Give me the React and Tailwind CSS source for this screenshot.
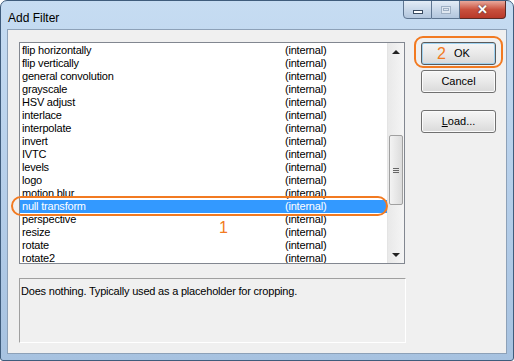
const filters = [
  "flip horizontally",
  "flip vertically",
  "general convolution",
  "grayscale",
  "HSV adjust",
  "interlace",
  "interpolate",
  "invert",
  "IVTC",
  "levels",
  "logo",
  "motion blur",
  "null transform",
  "perspective",
  "resize",
  "rotate",
  "rotate2",
];

const font = { fontFamily: '"Liberation Sans", Arial, sans-serif' };

function WinButton({ children, isDefault }) {
  return (
    <button
      className={`w-[75px] h-[23px] rounded-[3px] border text-[11px] text-black bg-gradient-to-b from-[#f6f6f6] via-[#e9e9e9] to-[#d9d9d9] flex items-center justify-center ${
        isDefault ? "border-[#5a5a5a] shadow-[inset_0_0_0_1px_#9fd2f0]" : "border-[#707070] shadow-[inset_0_0_0_1px_#fbfbfb]"
      }`}
    >
      {children}
    </button>
  );
}

function ScrollBar() {
  return (
    <div className="w-[17px] h-full bg-gradient-to-r from-[#e9e9e9] to-[#f5f5f5] border-l border-[#e4e4e4] flex flex-col">
      <div className="h-[17px] flex items-center justify-center">
        <div className="w-0 h-0 border-l-[4px] border-r-[4px] border-b-[4px] border-l-transparent border-r-transparent border-b-[#222]" />
      </div>
      <div className="h-[75px]" />
      <div className="h-[70px] mx-[1px] rounded-[2px] border border-[#a0a0a0] bg-gradient-to-r from-[#f3f3f3] to-[#dcdcdc] flex flex-col items-center justify-center gap-[1px]">
        <div className="w-[6px] h-px bg-[#666]" />
        <div className="w-[6px] h-px bg-[#666]" />
        <div className="w-[6px] h-px bg-[#666]" />
      </div>
      <div className="flex-1" />
      <div className="h-[17px] flex items-center justify-center">
        <div className="w-0 h-0 border-l-[4px] border-r-[4px] border-t-[4px] border-l-transparent border-r-transparent border-t-[#222]" />
      </div>
    </div>
  );
}

export default function App() {
  return (
    <div
      style={font}
      className="w-[514px] h-[361px] rounded-t-[7px] rounded-b-[3px] border border-[#3f5c7c] bg-gradient-to-b from-[#c6dcf2] via-[#b6cfea] to-[#a7c2e0] flex flex-col px-[6px] pb-[6px] relative overflow-hidden"
    >
      {/* title bar */}
      <div className="h-[28px] flex items-start">
        <div className="text-[12px] text-black pt-[8px] pl-[1px]">Add Filter</div>
        <div className="ml-auto flex mr-[1px] -mt-px">
          <div className="w-[29px] h-[19px] border border-[#5e7590] rounded-bl-[4px] bg-gradient-to-b from-[#e3ecf6] via-[#c9d8e9] to-[#b2c6dd] flex items-center justify-center">
            <div className="w-[10px] h-[4px] bg-white border border-[#3a4b60] mt-[5px]" />
          </div>
          <div className="w-[28px] h-[19px] border border-l-0 border-[#5e7590] bg-gradient-to-b from-[#e3ecf6] via-[#c9d8e9] to-[#b2c6dd] flex items-center justify-center">
            <div className="w-[10px] h-[8px] border border-[#9fb0c4] bg-[#dfe7f0] flex items-center justify-center">
              <div className="w-[6px] h-[3px] border border-[#9fb0c4]" />
            </div>
          </div>
          <div className="w-[46px] h-[19px] border border-l-0 border-[#5b2a25] rounded-br-[4px] bg-gradient-to-b from-[#e8a89c] via-[#c9503e] to-[#b8392a] flex items-center justify-center">
            <span className="text-white font-bold text-[13px] leading-none" style={{ textShadow: "0 0 2px #333" }}>
              ✕
            </span>
          </div>
        </div>
      </div>

      {/* client area */}
      <div className="flex-1 bg-[#f0f0f0] border border-[#8da1b8] px-[11px] pt-[12px] flex flex-col">
        <div className="flex">
          <div className="relative">
            <div className="w-[386px] h-[222px] bg-white border border-[#828790] flex overflow-hidden">
              <div className="flex-1 pt-px">
                {filters.map((f) => {
                  const sel = f === "null transform";
                  return (
                    <div
                      key={f}
                      className={`h-[13px] leading-[13px] text-[11px] tracking-[-0.2px] flex pl-[2px] ${
                        sel ? "bg-[#3399ff] text-white" : "text-black"
                      }`}
                    >
                      <span className="w-[263px]">{f}</span>
                      <span>(internal)</span>
                    </div>
                  );
                })}
              </div>
              <ScrollBar />
            </div>
            {/* annotation 1 */}
            <div className="absolute left-[-8px] top-[154px] w-[377px] h-[20px] rounded-full border-2 border-[#f27a21]" />
            <div className="absolute left-[200px] top-[178px] text-[16px] text-[#f27a21] leading-none">1</div>
          </div>

          <div className="ml-[16px] flex flex-col relative">
            <WinButton isDefault>
              <span className="text-[16px] text-[#f27a21] mr-[8px] ml-[-10px] leading-none">2</span>OK
            </WinButton>
            <div className="h-[5px]" />
            <WinButton>Cancel</WinButton>
            <div className="h-[17px]" />
            <WinButton>
              <span>
                <span className="underline">L</span>oad...
              </span>
            </WinButton>
            {/* annotation 2 */}
            <div className="absolute left-[-7px] top-[-6px] w-[89px] h-[32px] rounded-[9px] border-2 border-[#f27a21]" />
          </div>
        </div>

        <div className="mt-[14px] w-[387px] h-[65px] border border-t-[#a0a0a0] border-l-[#a0a0a0] border-r-white border-b-white text-[11px] tracking-[-0.2px] text-black px-[1px] pt-[4px]">
          Does nothing. Typically used as a placeholder for cropping.
        </div>
      </div>
    </div>
  );
}
